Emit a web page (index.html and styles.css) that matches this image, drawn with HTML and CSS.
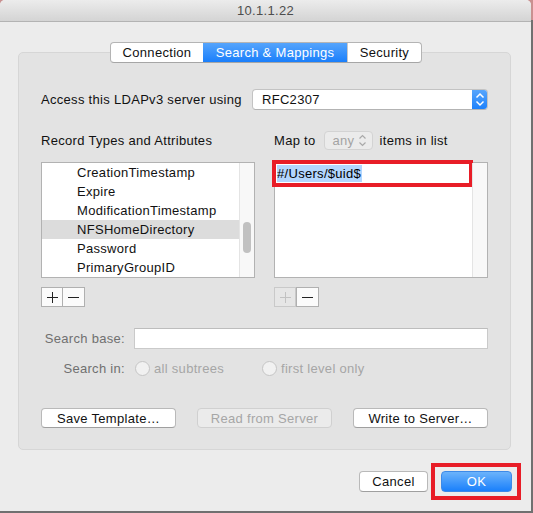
FILE: index.html
```html
<!DOCTYPE html>
<html>
<head>
<meta charset="utf-8">
<link rel="stylesheet" href="styles.css">
</head>
<body>
<div class="window">
  <div class="titlebar">10.1.1.22</div>
  <div class="content">
    <div class="tabs">
      <span class="tab tab-conn">Connection</span>
      <span class="tab tab-search sel">Search &amp; Mappings</span>
      <span class="tab tab-sec">Security</span>
    </div>
    <div class="group">
      <div class="access-row">
        <span class="access-label">Access this LDAPv3 server using</span>
        <div class="popup">
          <span class="popup-text">RFC2307</span>
          <span class="popup-arrows">
            <svg width="16" height="21" viewBox="0 0 16 21"><path d="M4.5 8.5 L8 5 L11.5 8.5 M4.5 12.5 L8 16 L11.5 12.5" fill="none" stroke="#fff" stroke-width="1.5"/></svg>
          </span>
        </div>
      </div>
      <div class="columns">
        <div class="col">
          <div class="col-head">Record Types and Attributes</div>
          <div class="list">
            <div class="rows">
              <div class="row">CreationTimestamp</div>
              <div class="row">Expire</div>
              <div class="row">ModificationTimestamp</div>
              <div class="row row-sel">NFSHomeDirectory</div>
              <div class="row">Password</div>
              <div class="row">PrimaryGroupID</div>
            </div>
            <div class="track"><div class="thumb"></div></div>
          </div>
          <div class="pm">
            <span class="pm-btn"><svg width="11" height="11" viewBox="0 0 11 11"><path d="M0 5.5 H11 M5.5 0 V11" stroke="#222" stroke-width="1"/></svg></span>
            <span class="pm-btn"><svg width="11" height="11" viewBox="0 0 11 11"><path d="M0 5.5 H11" stroke="#222" stroke-width="1"/></svg></span>
          </div>
        </div>
        <div class="col">
          <div class="col-head">
            <span>Map to</span>
            <span class="mini-popup"><span>any</span>
              <svg width="9" height="13" viewBox="0 0 9 13"><path d="M1.5 4.5 L4.5 1.5 L7.5 4.5 M1.5 8.5 L4.5 11.5 L7.5 8.5" fill="none" stroke="#a9a9a9" stroke-width="1.2"/></svg>
            </span>
            <span>items in list</span>
          </div>
          <div class="list">
            <div class="rows">
              <div class="edit-field"><span class="selected-text">#/Users/$uid$</span></div>
            </div>
            <div class="track"></div>
          </div>
          <div class="pm">
            <span class="pm-btn pm-disabled"><svg width="11" height="11" viewBox="0 0 11 11"><path d="M0 5.5 H11 M5.5 0 V11" stroke="#c2c2c2" stroke-width="1"/></svg></span>
            <span class="pm-btn"><svg width="11" height="11" viewBox="0 0 11 11"><path d="M0 5.5 H11" stroke="#222" stroke-width="1"/></svg></span>
          </div>
        </div>
      </div>
      <div class="base-row">
        <span class="form-label">Search base:</span>
        <span class="text-input"></span>
      </div>
      <div class="in-row">
        <span class="form-label">Search in:</span>
        <span class="radio-opt radio-first"><span class="radio"></span><span class="radio-label">all subtrees</span></span>
        <span class="radio-opt"><span class="radio"></span><span class="radio-label">first level only</span></span>
      </div>
      <div class="btn-row">
        <span class="btn">Save Template…</span>
        <span class="btn btn-disabled">Read from Server</span>
        <span class="btn">Write to Server…</span>
      </div>
    </div>
    <div class="footer">
      <span class="btn btn-cancel">Cancel</span>
      <span class="btn btn-ok">OK</span>
    </div>
  </div>
</div>
</body>
</html>
```
FILE: styles.css
```css
* { box-sizing: border-box; }
html, body { margin: 0; padding: 0; }
body {
  width: 533px;
  height: 513px;
  overflow: hidden;
  background: linear-gradient(#c99090 0, #c99090 20px, #707070 20px);
  font-family: "Liberation Sans", Arial, sans-serif;
  font-size: 13px;
  letter-spacing: 0.3px;
  color: #111;
}
.window {
  width: 531px;
  height: 511px;
  background: #ececec;
  border-radius: 5px 5px 0 0;
  overflow: hidden;
}
.titlebar {
  height: 22px;
  line-height: 22px;
  background: linear-gradient(#ececec, #d4d4d4);
  border-bottom: 1px solid #b3b3b3;
  text-align: center;
  color: #4d4d4d;
}
.content {
  padding: 20px 19px 0 18px;
}
.tabs {
  position: relative;
  z-index: 1;
  display: flex;
  width: 312px;
  height: 21px;
  margin-left: 92px;
  background: #fff;
  border: 1px solid #b4b4b4;
  border-bottom-color: #a6a6a6;
  border-radius: 4px;
  overflow: hidden;
}
.tab {
  display: flex;
  align-items: center;
  justify-content: center;
  height: 19px;
  color: #111;
}
.tab-conn { width: 92px; }
.tab-search { width: 144px; }
.tab-sec { width: 74px; border-left: 1px solid #c8c8c8; }
.tab.sel {
  background: linear-gradient(#55a4fc, #1a7ffb);
  color: #fff;
}
.group {
  width: 493px;
  margin-top: -11px;
  padding: 36px 22px 21px 22px;
  background: #e3e3e3;
  border: 1px solid #d6d6d6;
  border-radius: 5px;
}
.access-row {
  display: flex;
  align-items: center;
  height: 21px;
}
.access-label { width: 211px; }
.popup {
  display: flex;
  width: 236px;
  height: 21px;
  background: #fff;
  border: 1px solid #c3c3c3;
  border-bottom-color: #b3b3b3;
  border-radius: 4px;
  overflow: hidden;
}
.popup-text {
  flex: 1;
  padding-left: 9px;
  line-height: 19px;
}
.popup-arrows {
  width: 16px;
  height: 21px;
  margin-top: -1px;
  margin-right: -1px;
  background: linear-gradient(#5aa7fc, #1a7ffb);
  border-radius: 0 4px 4px 0;
}
.popup-arrows svg { display: block; }
.columns {
  display: grid;
  grid-template-columns: 214px 214px;
  column-gap: 19px;
  margin-top: 21px;
}
.col-head {
  display: flex;
  align-items: center;
  height: 19px;
}
.mini-popup {
  display: flex;
  align-items: center;
  justify-content: space-between;
  width: 49px;
  height: 19px;
  margin: 0 7px 0 8px;
  padding: 0 5px 0 8px;
  background: #ebebeb;
  border: 1px solid #d3d3d3;
  border-radius: 4px;
  color: #a3a3a3;
}
.mini-popup svg { display: block; }
.list {
  display: flex;
  height: 116px;
  margin-top: 12px;
  background: #fff;
  border: 1px solid #b2b2b2;
}
.rows { flex: 1; }
.row {
  height: 19px;
  line-height: 19px;
  padding-left: 35px;
  color: #111;
}
.row-sel { background: #dcdcdc; }
.track {
  width: 15px;
  background: #f8f8f8;
  border-left: 1px solid #e4e4e4;
}
.thumb {
  width: 8px;
  height: 31px;
  margin: 59px 0 0 3px;
  background: #c1c1c1;
  border-radius: 4px;
}
.edit-field {
  width: 193px;
  height: 19px;
  margin: 1px 0 0 1px;
  padding: 1px 0 0 1px;
  background: #fff;
  outline: 4px solid #e81d27;
}
.selected-text {
  display: inline-block;
  height: 17px;
  line-height: 17px;
  padding-right: 1px;
  background: #b3d6fe;
  color: #000;
}
.pm {
  display: flex;
  margin-top: 9px;
  height: 20px;
}
.pm-btn {
  display: flex;
  align-items: center;
  justify-content: center;
  width: 22px;
  height: 20px;
  background: #fbfbfb;
  border: 1px solid #b0b0b0;
}
.pm-btn + .pm-btn { border-left: none; }
.pm-btn svg { display: block; }
.pm-disabled {
  background: #e6e6e6;
  border-color: #c9c9c9;
}
.pm-disabled + .pm-btn { border-left: 1px solid #b0b0b0; width: 23px; }
.base-row {
  display: flex;
  align-items: center;
  height: 21px;
  margin-top: 21px;
}
.form-label {
  width: 84px;
  text-align: right;
  color: #707070;
}
.text-input {
  flex: 1;
  height: 21px;
  margin-left: 9px;
  background: #fff;
  border: 1px solid #cacaca;
  border-top-color: #bdbdbd;
}
.in-row {
  display: flex;
  align-items: center;
  height: 16px;
  margin-top: 11px;
}
.in-row .form-label { margin-right: 10px; }
.radio-opt {
  display: flex;
  align-items: center;
}
.radio-first { width: 127px; }
.radio {
  width: 15px;
  height: 15px;
  border-radius: 50%;
  background: #f1f1f1;
  border: 1px solid #c5c5c5;
}
.radio-label {
  margin-left: 4px;
  color: #a6a6a6;
}
.btn-row {
  display: flex;
  justify-content: space-between;
  margin-top: 32px;
}
.btn {
  display: flex;
  align-items: center;
  justify-content: center;
  width: 135px;
  height: 20px;
  background: #fff;
  border: 1px solid #b9b9b9;
  border-bottom-color: #9f9f9f;
  border-radius: 4px;
  color: #111;
}
.btn-disabled {
  background: #ebebeb;
  border-color: #d0d0d0;
  color: #a6a6a6;
}
.footer {
  display: flex;
  justify-content: flex-end;
  gap: 13px;
  margin-top: 21px;
}
.btn-cancel {
  width: 69px;
  height: 21px;
}
.btn-ok {
  position: relative;
  width: 71px;
  height: 21px;
  background: linear-gradient(#6cb3fb, #1a80fb);
  border: 1px solid #3d8ae8;
  color: #fff;
}
.btn-ok::after {
  content: "";
  position: absolute;
  top: -9px;
  bottom: -9px;
  left: -11px;
  right: -10px;
  border: 4px solid #e81d27;
}
```
